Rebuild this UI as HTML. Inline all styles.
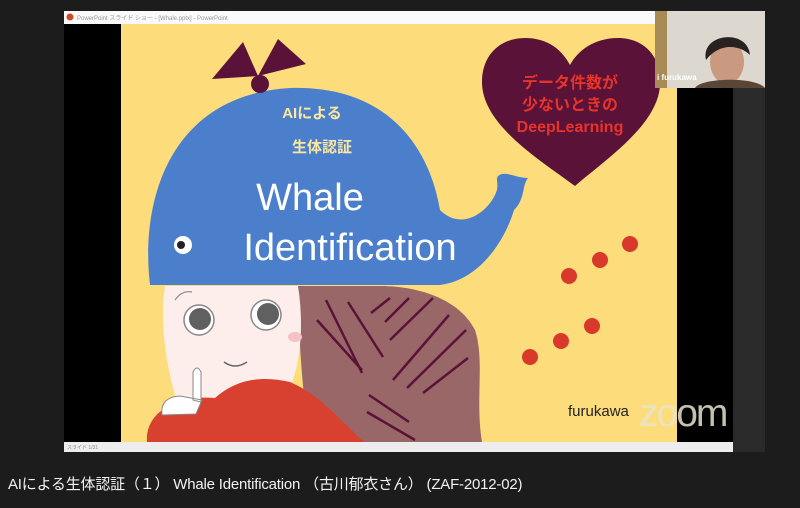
<!DOCTYPE html>
<html><head><meta charset="utf-8"><style>
body{margin:0;width:800px;height:508px;background:#1c1c1c;overflow:hidden;font-family:"Liberation Sans","Noto Sans CJK JP",sans-serif}
svg{position:absolute;left:0;top:0}
.cap{position:absolute;left:8px;top:473px;color:#f2f2f2;font-size:15px;font-family:"Liberation Sans","Noto Sans CJK JP",sans-serif;letter-spacing:-0.2px}
</style></head><body>
<svg width="800" height="508" viewBox="0 0 800 508">
<rect x="733" y="88" width="32" height="364" fill="#2a2a2a"/>
<rect x="64" y="11" width="669" height="441" fill="#000"/>
<rect x="64" y="11" width="591" height="13" fill="#fafafa"/>
<circle cx="70" cy="17" r="3.5" fill="#d24726"/>
<text x="77" y="20" font-size="6" fill="#999">PowerPoint スライド ショー - [Whale.pptx] - PowerPoint</text>
<rect x="121" y="24" width="556" height="418" fill="#fddd7b"/>
<!-- girl -->
<path d="M296 286 C300 330 300 380 310 442 L482 442 C475 400 485 360 475 330 C460 300 420 286 380 286 Z" fill="#9a6768"/>
<path d="M165 286 L298 286 C305 330 300 380 280 405 C250 430 190 420 175 395 C165 360 160 320 165 286 Z" fill="#fdeeec"/>
<path d="M175 300 Q182 290 192 292" stroke="#888" stroke-width="1.2" fill="none"/>
<circle cx="199" cy="320" r="15" fill="#fff" stroke="#888" stroke-width="1.5"/>
<circle cx="200" cy="319" r="11" fill="#606060"/>
<circle cx="266" cy="315" r="15" fill="#fff" stroke="#888" stroke-width="1.5"/>
<circle cx="268" cy="314" r="11" fill="#606060"/>
<ellipse cx="295" cy="337" rx="7" ry="5" fill="#f5c2c6"/>
<path d="M224 362 Q235 370 247 362" stroke="#666" stroke-width="1.5" fill="none"/>
<path d="M147 442 C145 410 180 395 215 398 C235 380 260 375 290 382 C320 395 340 420 364 442 Z" fill="#d84030"/>
<path d="M193 400 L193 372 Q197 364 201 372 L201 402 Z M162 415 Q160 397 180 396 L202 400 L196 414 Z" fill="#fff" stroke="#888" stroke-width="1"/>
<g stroke="#5a1238" stroke-width="2.5">
<line x1="326" y1="300" x2="362" y2="373"/><line x1="348" y1="302" x2="383" y2="357"/>
<line x1="317" y1="320" x2="362" y2="370"/>
<line x1="371" y1="313" x2="390" y2="298"/><line x1="385" y1="322" x2="409" y2="298"/><line x1="390" y1="340" x2="433" y2="298"/>
<line x1="393" y1="380" x2="449" y2="315"/><line x1="407" y1="388" x2="466" y2="330"/><line x1="423" y1="393" x2="468" y2="358"/>
<line x1="369" y1="395" x2="409" y2="422"/><line x1="367" y1="412" x2="415" y2="440"/>
</g>
<!-- whale -->
<path d="M150 285 C140 200 170 95 290 88 C390 85 430 150 440 210 C460 230 485 215 495 195 C500 185 495 180 498 176 C505 170 515 178 528 178 C522 185 525 200 514 210 C505 240 480 280 440 285 Z" fill="#4c7fcb"/>
<circle cx="183" cy="245" r="9" fill="#fff"/>
<circle cx="181" cy="245" r="4" fill="#222"/>
<path d="M212 79 L243 42 L258 76 Z M258 76 L278 39 L306 64 Z" fill="#5a1238"/>
<circle cx="260" cy="84" r="9" fill="#5a1238"/>
<text x="312" y="118" font-size="15" font-weight="bold" fill="#fbe7a0" text-anchor="middle">AIによる</text>
<text x="322" y="152" font-size="15" font-weight="bold" fill="#fbe7a0" text-anchor="middle">生体認証</text>
<text x="310" y="210" font-size="38" fill="#fff" text-anchor="middle">Whale</text>
<text x="350" y="260" font-size="38" fill="#fff" text-anchor="middle">Identification</text>
<!-- heart -->
<path d="M575 186 C540 160 482 125 482 82 C482 55 500 38 525 38 C548 38 562 50 570 65 C578 50 595 38 618 38 C645 38 662 58 660 85 C658 125 605 160 575 186 Z" fill="#5a1238"/>
<g font-size="16" font-weight="bold" fill="#e8332a" text-anchor="middle">
<text x="570" y="88">データ件数が</text>
<text x="570" y="110">少ないときの</text>
<text x="570" y="132">DeepLearning</text></g>
<g fill="#d8392a"><circle cx="630" cy="244" r="8"/><circle cx="600" cy="260" r="8"/><circle cx="569" cy="276" r="8"/><circle cx="592" cy="326" r="8"/><circle cx="561" cy="341" r="8"/><circle cx="530" cy="357" r="8"/></g>
<text x="568" y="416" font-size="15" fill="#222">furukawa</text>
<text x="639" y="426" font-size="39" fill="#e8e3cf" fill-opacity="0.85" letter-spacing="-2">zoom</text>
<rect x="64" y="442" width="669" height="10" fill="#ededed"/>
<text x="67" y="449" font-size="5" fill="#888">スライド 1/31</text>
<!-- webcam -->
<rect x="655" y="11" width="110" height="77" fill="#ddd8cf"/>
<rect x="655" y="11" width="12" height="77" fill="#a88a55"/>
<ellipse cx="727" cy="62" rx="17" ry="22" fill="#c99a80"/>
<path d="M706 60 C700 33 748 28 750 55 C740 45 720 42 706 60Z" fill="#2a2220"/>
<path d="M695 88 C700 78 755 76 765 88Z" fill="#5a4636"/>
<text x="657" y="80" font-size="8" fill="#fff" font-weight="bold">i furukawa</text>
</svg>
<div class="cap">AIによる生体認証（１） Whale Identification （古川郁衣さん） (ZAF-2012-02)</div>
</body></html>
